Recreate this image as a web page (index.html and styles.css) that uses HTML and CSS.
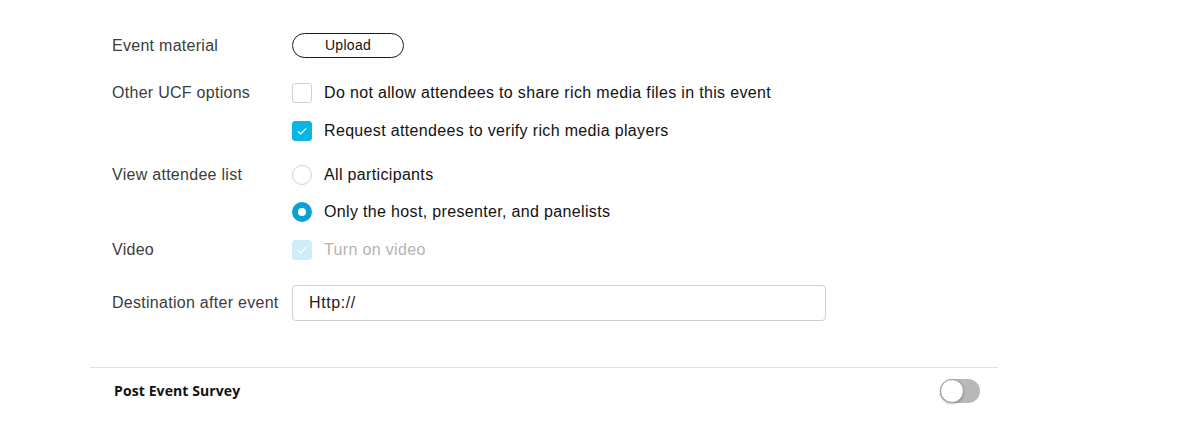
FILE: index.html
```html
<!DOCTYPE html>
<html>
<head>
<meta charset="utf-8">
<link rel="stylesheet" href="styles.css">
</head>
<body>
<div class="page">
  <div class="form">
    <div class="row row-upload">
      <div class="label">Event material</div>
      <div class="controls"><button class="btn-pill">Upload</button></div>
    </div>
    <div class="row row-ucf">
      <div class="label">Other UCF options</div>
      <div class="controls options">
        <div class="opt"><span class="box"></span><span class="opt-text">Do not allow attendees to share rich media files in this event</span></div>
        <div class="opt"><span class="box checked"><svg viewBox="0 0 20 20" width="20" height="20"><path d="M6 10.3l2.6 2.6L14.2 7.4" fill="none" stroke="#fff" stroke-width="1.2"/></svg></span><span class="opt-text">Request attendees to verify rich media players</span></div>
      </div>
    </div>
    <div class="row row-view">
      <div class="label">View attendee list</div>
      <div class="controls options">
        <div class="opt"><span class="radio"></span><span class="opt-text">All participants</span></div>
        <div class="opt"><span class="radio on"></span><span class="opt-text">Only the host, presenter, and panelists</span></div>
      </div>
    </div>
    <div class="row row-video">
      <div class="label">Video</div>
      <div class="controls options">
        <div class="opt disabled"><span class="box checked-dis"><svg viewBox="0 0 20 20" width="20" height="20"><path d="M6 10.3l2.6 2.6L14.2 7.4" fill="none" stroke="#fff" stroke-width="1.2"/></svg></span><span class="opt-text">Turn on video</span></div>
      </div>
    </div>
    <div class="row row-dest">
      <div class="label">Destination after event</div>
      <div class="controls"><div class="input">Http://</div></div>
    </div>
  </div>
  <div class="section">
    <div class="section-title">Post Event Survey</div>
    <div class="toggle"><span class="knob"></span></div>
  </div>
</div>
</body>
</html>
```
FILE: styles.css
```css
* { box-sizing: border-box; }
html, body { margin: 0; padding: 0; background: #fff; }
body { font-family: "Liberation Sans", Arial, sans-serif; color: #121212; }
.page { width: 1202px; height: 437px; padding-top: 33px; }
.form { padding-left: 112px; display: flex; flex-direction: column; }
.row { display: grid; grid-template-columns: 180px 534px; align-items: start; }
.label { font-size: 16px; letter-spacing: 0.28px; color: #3c3c3c; line-height: 20px; }
.row-upload { align-items: center; }
.row-upload .label { line-height: 25px; }
.btn-pill { width: 112px; height: 25px; border: 1px solid #1a1a1a; border-radius: 13px; background: #fff; font-family: "Liberation Sans", Arial, sans-serif; font-size: 14px; letter-spacing: 0.3px; color: #121212; padding: 0 0 2px; line-height: 20px; }
.row-ucf { margin-top: 25px; }
.row-view { margin-top: 24px; }
.row-video { margin-top: 18px; }
.row-dest { margin-top: 25px; align-items: center; }
.options { display: flex; flex-direction: column; gap: 18px; }
.row-view .options { gap: 17px; }
.opt { display: flex; align-items: center; height: 20px; gap: 12px; }
.opt-text { font-size: 16px; letter-spacing: 0.34px; line-height: 20px; color: #121212; }
.opt.disabled .opt-text { color: #b4b4b4; }
.box { width: 20px; height: 20px; border: 1px solid #d2d2d2; border-radius: 3px; display: block; background: #fff; flex: none; }
.box svg { display: block; margin: -1px; }
.box.checked { background: #07b6e4; border-color: #07b6e4; }
.box.checked-dis { background: #cdeef8; border-color: #cdeef8; }
.radio { width: 20px; height: 20px; border: 1px solid #d2d2d2; border-radius: 50%; display: block; flex: none; background: #fff; }
.radio.on { border: 6px solid #0a9fd5; }
.input { width: 534px; height: 36px; border: 1px solid #d0d0d0; border-radius: 4px; font-size: 16px; letter-spacing: 0.6px; line-height: 34px; padding-left: 16px; color: #1e1e1e; }
.section { margin-top: 46px; margin-left: 90px; width: 908px; border-top: 1px solid #e2e2e2; display: flex; align-items: center; justify-content: space-between; padding: 11px 18px 0 24px; }
.section-title { font-family: "Open Sans", "Noto Sans", sans-serif; font-weight: 700; font-size: 14px; letter-spacing: 0.1px; color: #121212; line-height: 24px; }
.toggle { width: 40px; height: 24px; border-radius: 12px; background: #b8b8b8; position: relative; }
.knob { position: absolute; left: 0; top: 0; width: 24px; height: 24px; border-radius: 50%; background: #fff; border: 1px solid #9a9a9a; box-shadow: 0 1px 2px rgba(0,0,0,0.25); }
```
